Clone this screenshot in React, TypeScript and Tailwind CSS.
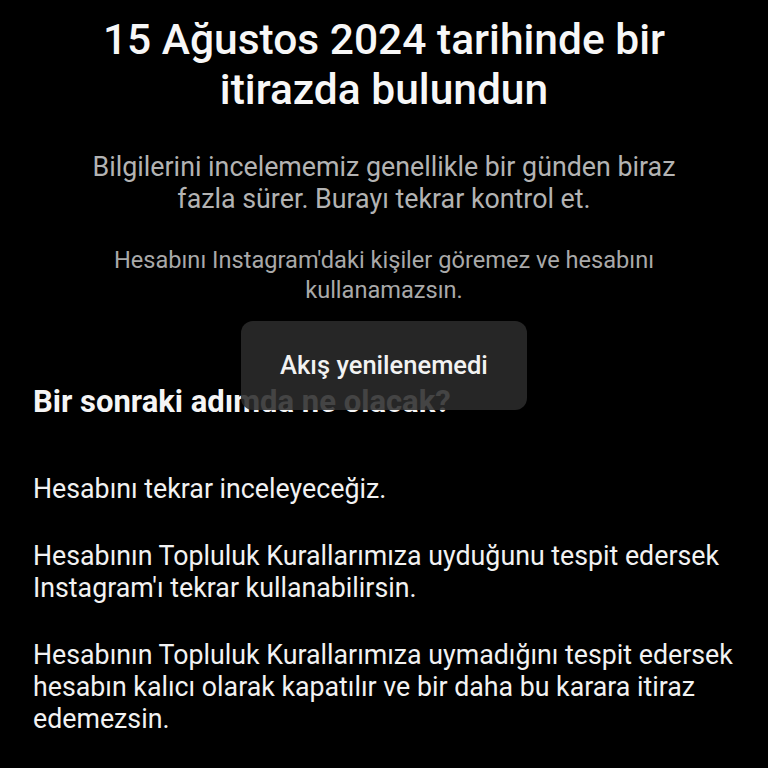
import React from "react";

// Appeal status screen with a transient toast on top
const paragraphs = [
  ["Hesabını tekrar inceleyeceğiz."],
  ["Hesabının Topluluk Kurallarımıza uyduğunu tespit edersek", "Instagram'ı tekrar kullanabilirsin."],
  [
    "Hesabının Topluluk Kurallarımıza uymadığını tespit edersek",
    "hesabın kalıcı olarak kapatılır ve bir daha bu karara itiraz",
    "edemezsin.",
  ],
];

// Toast is slightly see-through, the heading shows faintly behind it
const Toast: React.FC<{ text: string }> = ({ text }) => (
  <div className="absolute left-[241px] top-[321px] flex h-[89px] w-[286px] items-center justify-center rounded-[12px] bg-[rgba(43,43,43,0.88)]">
    <span className="text-[25.5px] font-medium text-[#f2f2f2]">{text}</span>
  </div>
);

export default function App() {
  return (
    <div
      className="relative h-[768px] w-[768px] overflow-hidden bg-black"
      style={{ fontFamily: "Roboto, 'Noto Sans', sans-serif" }}
    >
      <div className="flex flex-col items-center pt-[15px] text-center">
        <h1 className="text-[42.5px] font-medium leading-[50px] text-[#f7f7f7]">
          15 Ağustos 2024 tarihinde bir
          <br />
          itirazda bulundun
        </h1>
        <p className="mt-[36px] text-[26.8px] leading-[32px] text-[#b3b3b3]">
          Bilgilerini incelememiz genellikle bir günden biraz
          <br />
          fazla sürer. Burayı tekrar kontrol et.
        </p>
        <p className="mt-[30px] text-[23.6px] leading-[30px] text-[#a9a9a9]">
          Hesabını Instagram'daki kişiler göremez ve hesabını
          <br />
          kullanamazsın.
        </p>
      </div>

      <div className="px-[33px]">
        <h2 className="mt-[79px] text-[31px] font-bold leading-[36px] text-[#f5f5f5]">
          Bir sonraki adımda ne olacak?
        </h2>
        <div className="mt-[53px] flex flex-col gap-[35px]">
          {paragraphs.map((lines, i) => (
            <p key={i} className="text-[26.75px] leading-[32px] text-[#f2f2f2]">
              {lines.map((line, j) => (
                <React.Fragment key={j}>
                  {j > 0 && <br />}
                  {line}
                </React.Fragment>
              ))}
            </p>
          ))}
        </div>
      </div>

      <Toast text="Akış yenilenemedi" />
    </div>
  );
}
